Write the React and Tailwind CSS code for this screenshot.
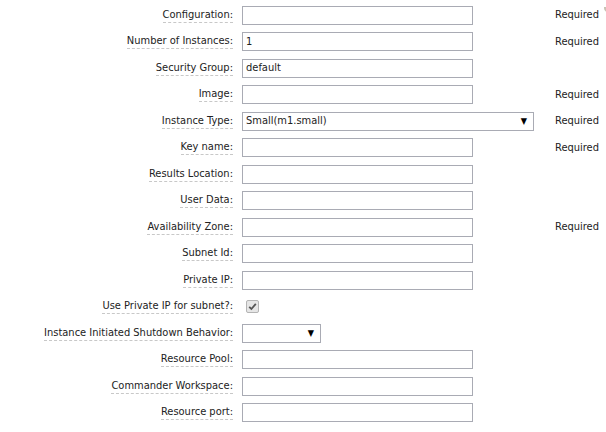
import React from 'react';

const rows = [
  { label: 'Configuration', type: 'input', required: true, help: true },
  { label: 'Number of Instances', type: 'input', value: '1', required: true },
  { label: 'Security Group', type: 'input', value: 'default' },
  { label: 'Image', type: 'input', required: true },
  { label: 'Instance Type', type: 'select', value: 'Small(m1.small)', required: true },
  { label: 'Key name', type: 'input', required: true },
  { label: 'Results Location', type: 'input' },
  { label: 'User Data', type: 'input' },
  { label: 'Availability Zone', type: 'input', required: true },
  { label: 'Subnet Id', type: 'input' },
  { label: 'Private IP', type: 'input' },
  { label: 'Use Private IP for subnet?', type: 'checkbox' },
  { label: 'Instance Initiated Shutdown Behavior', type: 'smallselect' },
  { label: 'Resource Pool', type: 'input' },
  { label: 'Commander Workspace', type: 'input' },
  { label: 'Resource port', type: 'input' },
];

// little help bubble next to the first "Required"
const HelpIcon = () => (
  <svg width="8" height="8" viewBox="0 0 8 8" className="-mt-[3px] ml-[5px] shrink-0">
    <circle cx="4" cy="4" r="4" fill="#c9c2b4" />
    <path d="M2.8 3 C2.8 1.8 5.2 1.8 5.2 3 C5.2 3.8 4 3.8 4 4.8" fill="none" stroke="#fff" strokeWidth="0.9" />
    <circle cx="4" cy="6.2" r="0.5" fill="#fff" />
  </svg>
);

const Control = ({ row }) => {
  if (row.type === 'checkbox') {
    return (
      <span className="ml-[4px] flex h-[13px] w-[13px] items-center justify-center rounded-[2px] border border-[#b4b4b4] bg-[#e6e6e6]">
        <svg width="9" height="9" viewBox="0 0 9 9">
          <path d="M1.2 4.8 L3.4 7 L7.8 1.8" fill="none" stroke="#555" strokeWidth="1.8" />
        </svg>
      </span>
    );
  }
  if (row.type === 'select' || row.type === 'smallselect') {
    return (
      <div
        className={`flex h-[19px] items-center justify-between border border-[#a9abb4] bg-white pl-[3px] pr-[6px] ${
          row.type === 'select' ? 'w-[292px]' : 'w-[79px]'
        }`}
      >
        <span>{row.value || ''}</span>
        <span className="text-[9px] text-black">▼</span>
      </div>
    );
  }
  return (
    <div className="flex h-[19px] w-[231px] items-center border border-[#a9abb4] bg-white pl-[3px]">
      {row.value || ''}
    </div>
  );
};

export default function App() {
  return (
    <div
      className="h-[432px] w-[606px] overflow-hidden bg-white pt-[2px] text-[11px] text-[#222]"
      style={{ fontFamily: '"DejaVu Sans Condensed", "DejaVu Sans", Tahoma, sans-serif' }}
    >
      {rows.map((row) => (
        <div key={row.label} className="grid h-[26.5px] grid-cols-[233px_322px_51px] items-center">
          <div className="flex justify-end">
            <span className="border-b border-dashed border-[#c8c8c8] leading-[14px]">{row.label}:</span>
          </div>
          <div className="pl-[9px]">
            <Control row={row} />
          </div>
          <div className="flex items-start overflow-hidden whitespace-nowrap">
            {row.required && <span>Required</span>}
            {row.help && <HelpIcon />}
          </div>
        </div>
      ))}
    </div>
  );
}
